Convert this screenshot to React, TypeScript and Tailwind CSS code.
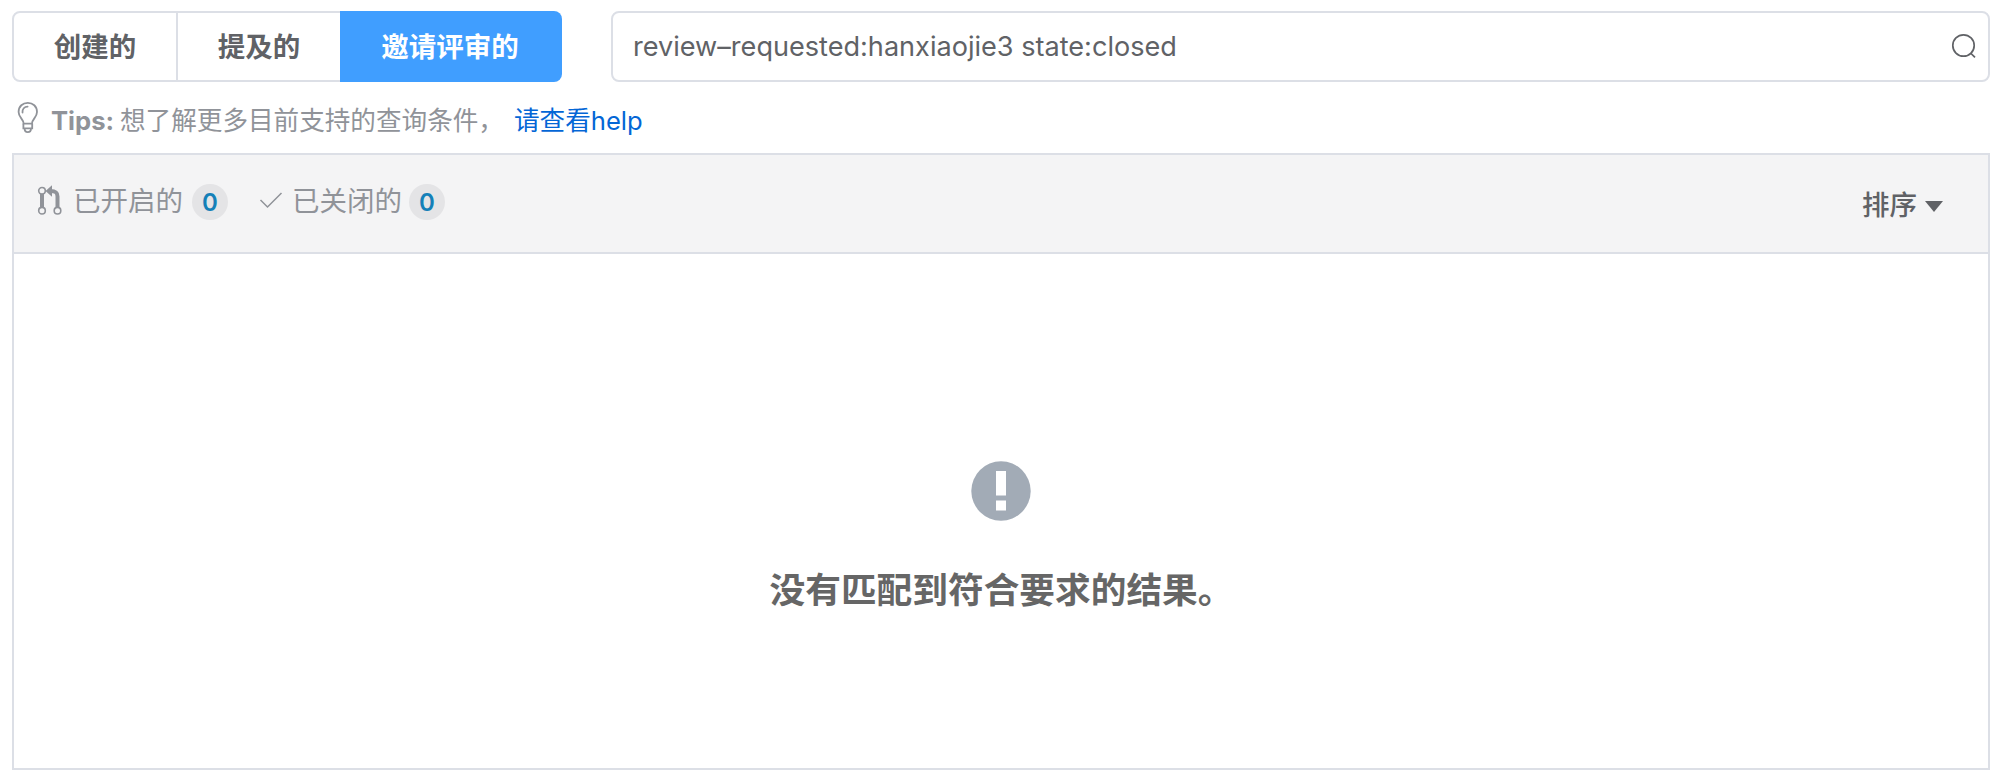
import React from "react";

const tabs = [
  { label: "创建的", className: "w-[166px] border-2 border-[#dcdfe6] rounded-l-[8px] text-[#606266]" },
  { label: "提及的", className: "w-[162px] border-y-2 border-[#dcdfe6] text-[#606266]" },
  { label: "邀请评审的", className: "w-[222px] rounded-r-[8px] bg-[#409eff] pr-[2px] text-white" },
];

function BulbIcon() {
  return (
    <svg className="h-[34px] w-[24px] shrink-0" viewBox="0 0 24 34" fill="none" stroke="#909399" strokeWidth="1.8">
      <path d="M7.6 22.6C7.6 18 2.6 16.5 2.6 11C2.6 5.3 6.8 1.8 11.8 1.8S21 5.3 21 11C21 16.5 16 18 16 22.6Z" />
      <path d="M6.5 11.5C6.2 8 8.4 5.6 11.6 5.6" strokeLinecap="round" />
      <path d="M7.4 22.6V27.4H16.2V22.6M8.6 27.6C8.6 30 9.4 31.2 11.8 31.2S15 30 15 27.6" />
    </svg>
  );
}

function PullRequestIcon() {
  return (
    <svg className="mb-[5px] h-[30px] w-[26px] shrink-0" viewBox="0 0 26 30" fill="none" stroke="#909399">
      <path d="M5 8.5V23M20.5 23V11.5C20.5 7.6 18.5 6 13.5 6" strokeWidth="4" />
      <path d="M8.5 6L15 .3V11.7Z" fill="#909399" stroke="none" />
      <g strokeWidth="1.6" fill="#f4f4f5">
        <circle cx="5" cy="5.8" r="3.3" />
        <circle cx="5" cy="25.7" r="3.3" />
        <circle cx="20.5" cy="25.7" r="3.3" />
      </g>
    </svg>
  );
}

function Badge({ value }: { value: number }) {
  return (
    <span className="flex size-[36px] items-center justify-center rounded-full bg-[#e4e4e6] pt-[1px] font-['Inter'] text-[24px] font-semibold text-[#1480b8]">
      {value}
    </span>
  );
}

export default function App() {
  return (
    <div className="h-[781px] w-[1999px] bg-white pt-[11px] pr-[9px] pl-[12px] font-['Inter','Noto_Sans_CJK_SC',sans-serif]">
      <div className="flex h-[71px] justify-between">
        <div className="flex">
          {tabs.map((tab) => (
            <button
              key={tab.label}
              className={`flex h-[71px] items-center justify-center pb-[2px] font-['Noto_Sans_CJK_SC'] text-[27.5px] font-bold whitespace-nowrap ${tab.className}`}
            >
              {tab.label}
            </button>
          ))}
        </div>
        <div className="flex w-[1379px] items-center justify-between rounded-[8px] border-2 border-[#dcdfe6] pr-[11px] pl-[20px]">
          <span className="pt-[2px] text-[27.1px] whitespace-nowrap text-[#606266]">review–requested:hanxiaojie3 state:closed</span>
          <svg className="mb-[2px] h-[26px] w-[26px]" viewBox="0 0 26 26" fill="none" stroke="#606266" strokeWidth="1.7">
            <circle cx="12.5" cy="12.5" r="10.7" />
            <path d="M19.5 20L24 24.4" />
          </svg>
        </div>
      </div>

      <div className="flex h-[71px] pt-[19px] pl-[4px] text-[25.6px] leading-[40px] whitespace-nowrap text-[#909399]">
        <BulbIcon />
        <span className="ml-[11px] w-[69px] font-bold">Tips:</span>
        <span className="w-[394px]">想了解更多目前支持的查询条件，</span>
        <a className="text-[#0366d6]">请查看help</a>
      </div>

      <section className="h-[617px] border-2 border-[#dcdfe6]">
        <header className="flex h-[99px] justify-between border-b-2 border-[#dcdfe6] bg-[#f4f4f5] pr-[45px] pl-[23px]">
          <div className="flex h-[94px] items-center text-[27.5px] whitespace-nowrap text-[#909399]">
            <PullRequestIcon />
            <span className="ml-[10px] w-[119px]">已开启的</span>
            <Badge value={0} />
            <svg className="mb-[4px] ml-[31px] h-[18px] w-[24px]" viewBox="0 0 24 18" fill="none" stroke="#909399" strokeWidth="1.5">
              <path d="M1.5 9L8.5 16L22.5 2" />
            </svg>
            <span className="ml-[9px] w-[117px]">已关闭的</span>
            <Badge value={0} />
          </div>
          <button className="flex items-center gap-[8px] pt-[4px] text-[27.5px] font-medium text-[#606266]">
            排序
            <svg className="mt-[2px] h-[11px] w-[18px]" viewBox="0 0 18 11">
              <path d="M0 0H18L9 11Z" fill="#606266" />
            </svg>
          </button>
        </header>
        <div className="flex flex-col items-center pt-[207px]">
          <svg className="size-[60px]" viewBox="0 0 60 60">
            <circle cx="30" cy="30" r="29.7" fill="#a2abb6" />
            <path d="M25 10H35V34.5H25ZM25 39.5H35V49.5H25Z" fill="#fff" />
          </svg>
          <p className="mt-[42px] pl-[1px] text-[35.7px] leading-[54px] font-bold whitespace-nowrap text-[#666]">没有匹配到符合要求的结果。</p>
        </div>
      </section>
    </div>
  );
}
